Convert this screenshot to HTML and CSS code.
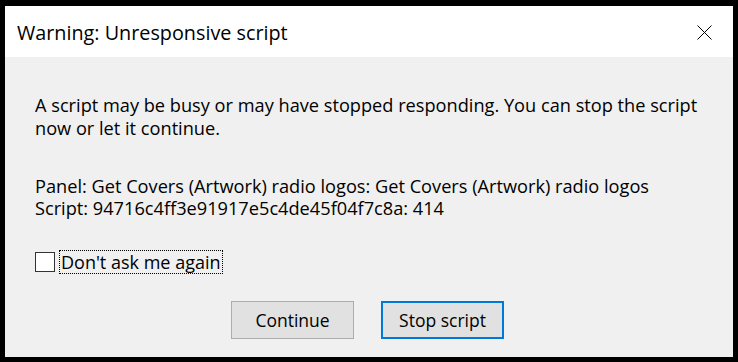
FILE: index.html
```html
<!DOCTYPE html>
<html>
<head>
<meta charset="utf-8">
<link rel="stylesheet" href="styles.css">
</head>
<body>
<div class="dialog">
  <div class="titlebar">
    <span class="title">Warning: Unresponsive script</span>
    <svg class="close" width="15" height="15" viewBox="0 0 15 15">
      <path d="M0.5 0.5 L14.5 14.5 M14.5 0.5 L0.5 14.5" stroke="#000" stroke-width="1" fill="none"/>
    </svg>
  </div>
  <div class="content">
    <p class="msg">A script may be busy or may have stopped responding. You can stop the script now or let it continue.</p>
    <p class="msg info">Panel: Get Covers (Artwork) radio logos: Get Covers (Artwork) radio logos<br>Script: 94716c4ff3e91917e5c4de45f04f7c8a: 414</p>
    <div class="check-row">
      <span class="box"></span>
      <span class="label">Don't ask me again</span>
    </div>
    <div class="buttons">
      <button class="btn">Continue</button>
      <button class="btn default">Stop script</button>
    </div>
  </div>
</div>
</body>
</html>
```

FILE: styles.css
```css
html, body {
  margin: 0;
  padding: 0;
}
body {
  background: #000;
  width: 738px;
  height: 362px;
  box-sizing: border-box;
  padding: 6px 5px 5px 5px;
  font-family: "Open Sans", "Noto Sans", sans-serif;
  color: #000;
}
.dialog {
  width: 728px;
  height: 351px;
  display: flex;
  flex-direction: column;
  background: #f0f0f0;
}
.titlebar {
  height: 51px;
  background: #fff;
  display: flex;
  align-items: center;
  justify-content: space-between;
  padding: 0 21px 0 12px;
  flex: none;
}
.title {
  font-size: 19.8px;
  margin-top: 2px;
}
.close {
  display: block;
  margin-top: 1px;
}
.content {
  flex: 1;
  padding: 37px 30px 0 30px;
  display: flex;
  flex-direction: column;
}
.msg {
  margin: 0;
  font-size: 18.2px;
  line-height: 23px;
}
.info {
  margin-top: 35px;
  line-height: 22px;
}
.check-row {
  margin-top: 31px;
  display: flex;
  align-items: center;
  height: 24px;
}
.box {
  width: 18px;
  height: 18px;
  border: 1px solid #333;
  background: #fff;
  flex: none;
}
.label {
  margin-left: 4px;
  border: 1px dotted #000;
  height: 22px;
  line-height: 22px;
  font-size: 18px;
  padding: 0 1px;
}
.buttons {
  margin-top: 27px;
  display: flex;
  justify-content: center;
  gap: 27px;
  padding-right: 3px;
}
.btn {
  width: 123px;
  height: 38px;
  box-sizing: border-box;
  background: #e1e1e1;
  border: 1px solid #adadad;
  font-family: "Open Sans", "Noto Sans", sans-serif;
  font-size: 17.5px;
  color: #000;
  padding: 0;
  margin: 0;
}
.btn.default {
  border: 2px solid #0078d7;
}
```
